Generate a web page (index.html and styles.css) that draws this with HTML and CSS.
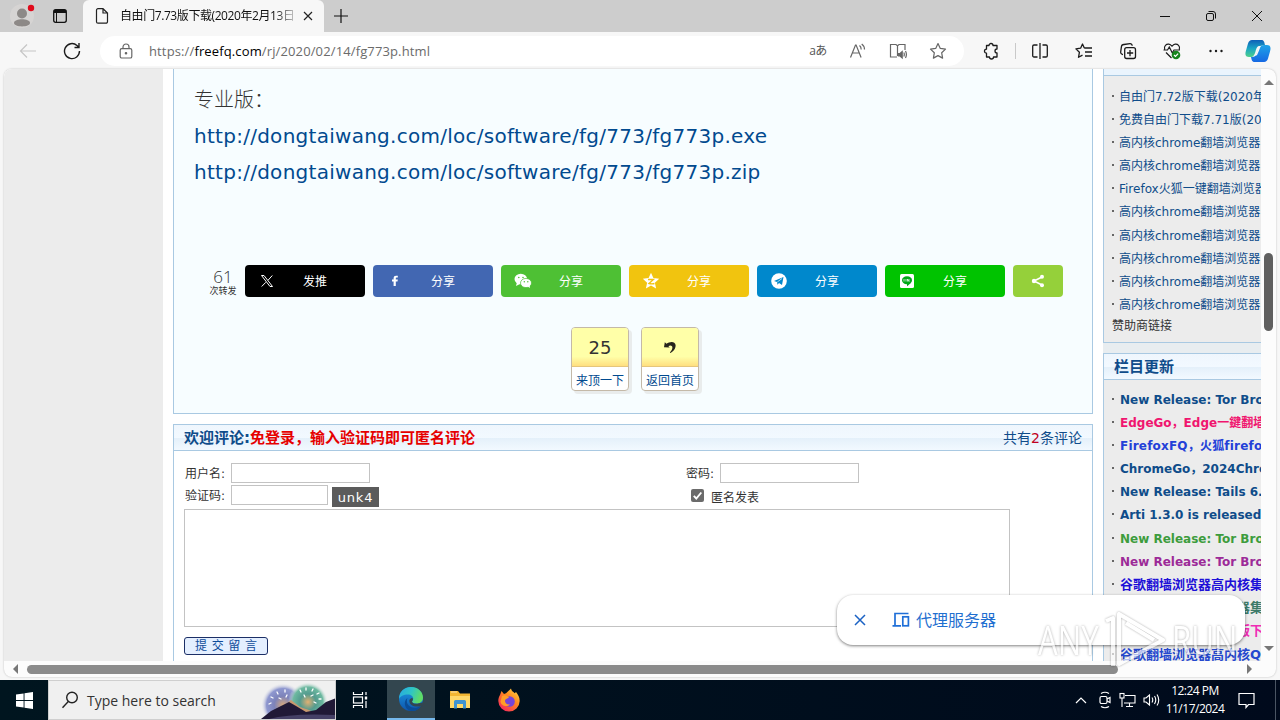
FILE: index.html
```
<!DOCTYPE html>
<html lang="zh">
<head>
  <meta charset="UTF-8">
  <title>自由门7.73版下载(2020年2月13日)</title>
  <link rel="stylesheet" href="styles.css">
</head>
<body>
<div class="screen">

  <div class="tabbar">
    <svg class="avatar" width="30" height="32" viewBox="0 0 30 32"><circle cx="15" cy="16" r="12" fill="#d6d4d3"/><circle cx="15" cy="13.500" r="5" fill="#8d8987"/><path d="M7 23c0-5 16-5 16 0 0 4.500-16 4.500-16 0z" fill="#8d8987"/><circle cx="24" cy="8" r="3.200" fill="#e00b1c"/></svg>
    <svg class="spaces" width="16" height="16" viewBox="0 0 16 16"><rect x="1.700" y="1.700" width="12.600" height="12.600" rx="2" fill="none" stroke="#111" stroke-width="1.300"/><path d="M2 2h12v3H2z" fill="#111"/><path d="M4.500 4v10" stroke="#111"/></svg>
    <div class="tab">
      <svg width="14" height="18" viewBox="0 0 14 18" fill="none" stroke="#222" stroke-width="1.200"><path d="M1.500 3.200a1.500 1.500 0 0 1 1.500-1.500h5L12.500 6v8.700a1.500 1.500 0 0 1-1.500 1.500H3a1.500 1.500 0 0 1-1.500-1.500zM8 1.700V6h4.500"/></svg>
      <span class="tab-title">自由门7.73版下载(2020年2月13日</span>
      <svg width="10" height="10" viewBox="0 0 10 10" stroke="#222" stroke-width="1.200"><path d="M1 1l8 8M9 1L1 9"/></svg>
    </div>
    <svg class="plus" width="16" height="16" viewBox="0 0 16 16" stroke="#111" stroke-width="1.200"><path d="M8 1v14M1 8h14"/></svg>
    <div class="winbtns">
      <svg width="12" height="12" viewBox="0 0 12 12" stroke="#111"><path d="M1 6.500h10"/></svg>
      <svg width="12" height="12" viewBox="0 0 12 12" stroke="#111" fill="none"><rect x="1.500" y="3.500" width="7" height="7" rx="1.500"/><path d="M3.500 1.500H8a2.500 2.500 0 0 1 2.500 2.500v4.500"/></svg>
      <svg width="12" height="12" viewBox="0 0 12 12" stroke="#111"><path d="M1 1l10 10M11 1L1 11"/></svg>
    </div>
  </div>

  <div class="toolbar">
    <div class="tool"><svg width="18" height="16" viewBox="0 0 18 16" fill="none" stroke="#c6c6c6" stroke-width="1.200"><path d="M17 8H1.500M8 1.500L1.500 8 8 14.500"/></svg></div>
    <div class="tool"><svg width="18" height="18" viewBox="0 0 18 18" fill="none" stroke="#1b1b1b" stroke-width="1.400"><path d="M16.500 9A7.500 7.500 0 1 1 14 3.500L15.800 5.300M16 1v4.500h-4.500"/></svg></div>
    <div class="address">
      <svg class="lock" width="14" height="16" viewBox="0 0 14 16" fill="none" stroke="#666" stroke-width="1.200"><rect x="1.200" y="5.600" width="11.600" height="9.400" rx="1.600"/><path d="M4 5.500V4a3 3 0 0 1 6 0v1.500"/><circle cx="7" cy="10.300" r=".7" fill="#666"/></svg>
      <span class="url">https://<b>freefq.com</b>/rj/2020/02/14/fg773p.html</span>
      <div class="addr-tool lang">aあ</div>
      <div class="addr-tool"><svg width="18" height="18" viewBox="0 0 18 18" fill="none" stroke="#666" stroke-width="1.200"><path d="M1.500 15.500L6.500 3h.6l5 12.500M3.300 11h7M10.500 3.500q1.700 1.300 1.700 4M12.700 2q2.800 2 2.800 5.500"/></svg></div>
      <div class="addr-tool"><svg width="18" height="18" viewBox="0 0 18 18" fill="none" stroke="#666" stroke-width="1.200"><path d="M8 15H1.500V2.500h5.500l1.500 1.300V14M8.500 3.800L10 2.500h6V8"/><path d="M9.500 11.500h1.500l2.200-2v6.500L11 14H9.500z" fill="#666"/><path d="M14.800 10.500q1 2 0 4M16.500 9q1.800 3.500 0 7"/></svg></div>
      <div class="addr-tool"><svg width="18" height="18" viewBox="0 0 18 18" fill="none" stroke="#666" stroke-width="1.200" stroke-linejoin="round"><path d="M9 1.500l2.300 4.900 5.200.7-3.800 3.700.9 5.300L9 13.600l-4.600 2.500.9-5.300L1.500 7.100l5.200-.7z"/></svg></div>
    </div>
    <div class="tool ext"><svg width="18" height="18" viewBox="0 0 18 18" fill="none" stroke="#1b1b1b" stroke-width="1.300" stroke-linejoin="round"><path d="M4.500 3.500H7a2 2 0 0 1 4 0h4V7a2 2 0 0 0 0 4v4h-3.500a2 2 0 0 1-4 0h-3v-3.800a2 2 0 0 1 0-4z"/></svg></div>
    <div class="divider"></div>
    <div class="tool"><svg width="18" height="18" viewBox="0 0 18 18" fill="none" stroke="#1b1b1b" stroke-width="1.300"><path d="M6.500 3H3a1.300 1.300 0 0 0-1.300 1.300v9.400A1.300 1.300 0 0 0 3 15h3.500M11.500 3H15a1.300 1.300 0 0 1 1.300 1.300v9.400A1.300 1.300 0 0 1 15 15h-3.500M9 1v16"/></svg></div>
    <div class="tool"><svg width="18" height="18" viewBox="0 0 18 18" fill="none" stroke="#1b1b1b" stroke-width="1.300" stroke-linejoin="round"><path d="M9.300 6L7.500 2 5.600 6.200.9 6.900l3.500 3.400-.9 5 4-2.200M9.300 6H17M10 10h7M10 14h7"/></svg></div>
    <div class="tool"><svg width="18" height="18" viewBox="0 0 18 18" fill="none" stroke="#1b1b1b" stroke-width="1.300"><path d="M4 12.500A2.300 2.300 0 0 1 1.700 9.800l.7-5A2.500 2.500 0 0 1 5 2.500l6-.8a2 2 0 0 1 2.200 2"/><rect x="5.700" y="5.700" width="10.800" height="10.800" rx="2"/><path d="M11 8v6.200M8 11h6.200"/></svg></div>
    <div class="tool"><svg width="18" height="18" viewBox="0 0 18 18" fill="none" stroke="#1b1b1b" stroke-width="1.200"><path d="M1.700 7.500C.5 4 3.500 1.700 6 2.200c1.500.2 2.300 1.200 3 2 .7-.8 1.500-1.800 3-2 2.500-.5 5.500 1.800 4.300 5.300M.5 8h4l1.800-3 3 6L11 8h6M3 10.500l5.500 5.500"/><circle cx="13" cy="13" r="4.300" fill="#16851c" stroke="none"/><path d="M11 13l1.500 1.500 2.600-2.800" stroke="#fff"/></svg></div>
    <div class="tool"><svg width="16" height="4" viewBox="0 0 16 4" fill="#1b1b1b"><circle cx="2.500" cy="2" r="1.200"/><circle cx="8" cy="2" r="1.200"/><circle cx="13.500" cy="2" r="1.200"/></svg></div>
    <div class="tool copilot">
      <svg width="26" height="24" viewBox="0 0 26 24">
        <defs>
          <linearGradient id="cpA" x1="0" y1="0" x2="0" y2="1"><stop offset="0" stop-color="#0e5fb8"/><stop offset=".5" stop-color="#1aa5c4"/><stop offset="1" stop-color="#4fd08b"/></linearGradient>
          <linearGradient id="cpB" x1="0" y1="0" x2="0" y2="1"><stop offset="0" stop-color="#1ea3e8"/><stop offset="1" stop-color="#1668e3"/></linearGradient>
        </defs>
        <path d="M7 1h9c3 0 3.300 2 4 5l-5 1c-3 0-3.500 2-4.500 5.500S8.500 18 5.500 18H4c-4 0-4-3.500-3-6.500l2-7C3.700 2.300 5 1 7 1z" fill="url(#cpA)"/>
        <path d="M19 23h-9c-3 0-3.300-2-4-5 4 0 5-1 6-4.500S15.500 6 19 6h3c4 0 4 3.500 3 6.500l-2 7c-.7 2.200-2 3.500-4 3.500z" fill="url(#cpB)"/>
        <path d="M15.800 7q-2 0-3.200 3.700L10.400 17q2-.5 3-4z" fill="#f7f7f7"/>
      </svg>
    </div>
  </div>

  <div class="frame">
    <div class="page">
      <div class="margin"></div>
      <div class="main">
        <div class="article">
          <p>专业版：</p>
          <p class="dl"><a>http://dongtaiwang.com/loc/software/fg/773/fg773p.exe</a></p>
          <p class="dl"><a>http://dongtaiwang.com/loc/software/fg/773/fg773p.zip</a></p>
          <div class="share">
            <div class="total"><span class="num">61</span><span class="lbl">次转发</span></div>
            <div class="btn x"><i><svg width="14" height="14" viewBox="0 0 14 14" fill="none" stroke="#fff"><path d="M1.500 1.500h2.500l8.500 11H10zM12.300 1.500L8 6.300M5.800 8.300L1.700 12.500"/></svg></i><span>发推</span></div>
            <div class="btn fb"><i><svg width="14" height="14" viewBox="0 0 14 14" fill="#fff"><path d="M5.600 12V7.500H4V5.600h1.600V4.200C5.600 2.500 6.600 1.700 8 1.700h1.800v1.900H8.600c-.6 0-.8.300-.8.800v1.200h2l-.3 1.900H7.800V12z"/></svg></i><span>分享</span></div>
            <div class="btn wx"><i><svg width="18" height="16" viewBox="0 0 18 16"><ellipse cx="6.800" cy="6" rx="6.300" ry="5.200" fill="#fff"/><path d="M3 9l-1 4 4-2z" fill="#fff"/><ellipse cx="12" cy="10" rx="5.500" ry="4.600" fill="#fff" stroke="#4ec034" stroke-width=".7"/><path d="M13 13l3 2-.5-3z" fill="#fff"/><g fill="#4ec034"><circle cx="4.800" cy="4.500" r=".8"/><circle cx="9" cy="4.500" r=".8"/><circle cx="10.300" cy="8.800" r=".7"/><circle cx="13.800" cy="8.800" r=".7"/></g></svg></i><span>分享</span></div>
            <div class="btn qz"><i><svg width="18" height="18" viewBox="0 0 18 18"><path d="M9 .8l2.400 5.300 5.800.7-4.300 3.900 1.200 5.800L9 13.600l-5.100 2.900 1.200-5.800L.8 6.800l5.800-.7z" fill="#fff"/><path d="M6 7.500h5.500L7 11.500q3 .7 5.500 0" fill="none" stroke="#f1c40f" stroke-width="1.300"/></svg></i><span>分享</span></div>
            <div class="btn tg"><i><svg width="16" height="16" viewBox="0 0 16 16"><circle cx="8" cy="8" r="7.800" fill="#fff"/><path d="M3 8l9.500-4L11 12 8 10l-1.500 1.800L6 9z" fill="#0088cc"/><path d="M6.300 9L11 5.500" stroke="#fff" stroke-width=".7"/></svg></i><span>分享</span></div>
            <div class="btn ln"><i><svg width="14" height="14" viewBox="0 0 14 14"><rect width="14" height="14" rx="1.500" fill="#fff"/><path d="M7 2.300c3 0 5 1.700 5 3.900 0 2.500-3 4.500-5 6v-2C4 10.100 2 8.500 2 6.200 2 4 4 2.300 7 2.300z" fill="#00a818"/><path d="M4 5v2.500M6 5v2.500M7.500 7.500V5L9 7.500V5" stroke="#fff" stroke-width=".7" fill="none"/></svg></i><span>分享</span></div>
            <div class="btn more"><svg width="14" height="14" viewBox="0 0 14 14" fill="#fff"><path d="M11 3L3 7l8 4" fill="none" stroke="#fff" stroke-width="1.600"/><circle cx="11" cy="2.800" r="2"/><circle cx="3" cy="7" r="2.200"/><circle cx="11" cy="11.200" r="2"/></svg></div>
          </div>
          <div class="digg">
            <div class="digg-box"><div class="digg-top">25</div><div class="digg-bottom">来顶一下</div></div>
            <div class="digg-box"><div class="digg-top"><svg width="14" height="14" viewBox="0 0 14 14"><path d="M1 7.200l.8-5 1.700 1.600C6.500 1.500 12 .8 12.600 5c.3 3.500-2.300 6.500-5 8l-.8-.6C9.500 10 9.800 7.500 9 6.300 8 5 6.500 5.500 5.400 6.200l1.300 1.400z" fill="#27241c"/></svg></div><div class="digg-bottom">返回首页</div></div>
          </div>
        </div>

        <div class="comments">
          <div class="bar"><strong>欢迎评论:<em>免登录，输入验证码即可匿名评论</em></strong><span class="count">共有<em>2</em>条评论</span></div>
          <div class="form">
            <div class="row"><div class="half"><label>用户名:</label><input type="text" class="wide"></div><div class="half"><label class="short">密码:</label><input type="text" class="wide"></div></div>
            <div class="row second"><div class="half"><label>验证码:</label><input type="text" class="code"><span class="captcha">unk4</span></div><div class="half"><span class="check"><svg width="13" height="13" viewBox="0 0 13 13"><rect width="13" height="13" rx="2" fill="#6b6b6b"/><path d="M2.800 6.800l2.500 2.700 5-6" fill="none" stroke="#fff" stroke-width="1.900"/></svg></span><label class="anon">匿名发表</label></div></div>
            <textarea></textarea>
            <button>提 交 留 言</button>
          </div>
        </div>
      </div>

      <div class="side">
        <div class="box">
          <div class="cut"></div>
          <ul>
            <li>自由门7.72版下载(2020年</li>
            <li>免费自由门下载7.71版(2020</li>
            <li>高内核chrome翻墙浏览器</li>
            <li>高内核chrome翻墙浏览器</li>
            <li>Firefox火狐一键翻墙浏览器</li>
            <li>高内核chrome翻墙浏览器</li>
            <li>高内核chrome翻墙浏览器</li>
            <li>高内核chrome翻墙浏览器</li>
            <li>高内核chrome翻墙浏览器</li>
            <li>高内核chrome翻墙浏览器</li>
          </ul>
          <div class="sponsor">赞助商链接</div>
        </div>
        <div class="box">
          <div class="bar"><strong>栏目更新</strong></div>
          <ul class="bold">
            <li>New Release: Tor Browser</li>
            <li class="pink">EdgeGo，Edge一鍵翻墙</li>
            <li class="blue">FirefoxFQ，火狐firefox</li>
            <li>ChromeGo，2024Chrome</li>
            <li>New Release: Tails 6.9</li>
            <li>Arti 1.3.0 is released:</li>
            <li class="green">New Release: Tor Browser</li>
            <li class="purple">New Release: Tor Browser</li>
            <li class="navy cjk">谷歌翻墙浏览器高内核集</li>
            <li class="teal cjk">谷歌翻墙高内核浏览器集</li>
            <li class="magenta cjk">自由门浏览器七点九版下</li>
            <li class="royal cjk">谷歌翻墙浏览器高内核Q</li>
          </ul>
        </div>
      </div>
    </div>
    <div class="vscroll"><i class="up"></i><div class="thumb"></div><i class="down"></i></div>
    <div class="hscroll"><i class="left"></i><div class="thumb"></div><i class="right"></i></div>
  </div>

  <div class="taskbar">
    <div class="start"><svg width="17" height="17" viewBox="0 0 17 17" fill="#fff"><path d="M0 2.500l7.600-1.100V8H0zM8.500 1.300L17 0v8H8.500zM0 9h7.600v6.500L0 14.500zM8.500 9H17v8l-8.500-1.300z"/></svg></div>
    <div class="search">
      <svg class="glass" width="18" height="18" viewBox="0 0 18 18" fill="none" stroke="#222" stroke-width="1.400"><circle cx="11" cy="6.500" r="5.300"/><path d="M7.300 10.500L1.500 16.800"/></svg>
      <span>Type here to search</span>
      <svg class="art" width="74" height="38" viewBox="0 0 74 38">
        <defs>
          <radialGradient id="fwA"><stop offset="0" stop-color="#d6a97e"/><stop offset=".4" stop-color="#7d83ba"/><stop offset=".75" stop-color="#8e97cf"/><stop offset="1" stop-color="#f0f0f0" stop-opacity="0"/></radialGradient>
          <radialGradient id="fwB"><stop offset="0" stop-color="#e2b072"/><stop offset=".4" stop-color="#549b8f"/><stop offset=".75" stop-color="#6db9a0"/><stop offset="1" stop-color="#f0f0f0" stop-opacity="0"/></radialGradient>
        </defs>
        <circle cx="22" cy="24" r="22" fill="url(#fwA)"/>
        <circle cx="47" cy="21" r="20" fill="url(#fwB)"/>
        <path d="M14 32l16-13 9 7 9 3 8 4-20 4z" fill="#c8996f"/>
        <path d="M0 38l10-8 10-5 8-4 7 4 10 6 10-2 10-8 10-4v22z" fill="#201936"/>
        <path d="M8 38q22-6 66-4v4z" fill="#454066"/>
        <path d="M10 16l2 1M16 11l1 2M24 9v2M8 23l2-1M18 17l2 1M26 14l-1 2M39 9l1 2M45 7v2M52 8l-1 2M58 12l-2 1M60 18h-2M43 14l1 2M52 14l-2 1M55 22l-2-1" stroke="#fff" stroke-width="1.300" stroke-linecap="round"/>
      </svg>
    </div>
    <div class="app"><svg width="16" height="16" viewBox="0 0 16 16" fill="none" stroke="#fff" stroke-width="1.200"><path d="M1.500 0v2.500h9V0M1.500 16v-2.500h9V16M14 0v3M14 9v7"/><rect x="1.500" y="5" width="9" height="6"/><path d="M14 4.500v3" stroke-width="2.400"/></svg></div>
    <div class="app active"><svg width="26" height="26" viewBox="0 0 26 26">
      <defs>
        <linearGradient id="edA" x1="0" y1="0" x2="1" y2=".3"><stop offset="0" stop-color="#26a7e3"/><stop offset=".55" stop-color="#2fc5c5"/><stop offset="1" stop-color="#5fdc66"/></linearGradient>
        <linearGradient id="edB" x1="0" y1="0" x2="0" y2="1"><stop offset="0" stop-color="#1c9be4"/><stop offset="1" stop-color="#0e55ad"/></linearGradient>
      </defs>
      <circle cx="13" cy="13" r="12" fill="url(#edB)"/>
      <path d="M1 13C1 5 7 1 13 1c7 0 12 5 12 10.500 0 4-3 6-6.500 6-3 0-4.500-1-4.500-2 0-.9 1.200-1.200 1.200-3 0-2.300-2.200-4-5.200-4C5.500 8.500 2 10.500 1 13z" fill="url(#edA)"/>
      <path d="M9.500 12C7 18 12 23 19 21.500c2-.4 3.500-1.500 4.300-2.500C20 27 9 27 7 19c-.7-3 .5-5.700 2.500-7z" fill="#0b4c96"/>
      <path d="M14 15.500c0 1.600 3 3.300 7 1.700l4.800-.8-1 3c-6 2.600-13.500 1-13.500-4.600 0-1.500 1.300-2.800 3-2.900.9.800.9 2.200-.3 3.600z" fill="#33464f"/>
    </svg></div>
    <div class="app"><svg width="22" height="20" viewBox="0 0 22 20"><path d="M1 1h8l2 2.500h10V18H1z" fill="#f2b632"/><path d="M2 2h6" stroke="#fff" stroke-width=".6"/><path d="M1 6h20v12H1z" fill="#ffd869"/><path d="M5 18V11.500a1.500 1.500 0 0 1 1.500-1.500h9a1.500 1.500 0 0 1 1.500 1.500V18.500h-3V14H8v4.500H5z" fill="#3f93d2"/></svg></div>
    <div class="app"><svg width="24" height="24" viewBox="0 0 24 24">
      <defs><linearGradient id="ffA" x1="1" y1="0" x2=".2" y2="1"><stop offset="0" stop-color="#ffe14a"/><stop offset=".45" stop-color="#ff8a1f"/><stop offset="1" stop-color="#f4245e"/></linearGradient></defs>
      <path d="M3 7l1.500-4L7 6l2-.7L14 .5c.3 2.500 2 3 3.700 4.700L19 4c2 2.500 3.700 5 3.700 9A10.700 10.700 0 0 1 12 23.500 10.700 10.700 0 0 1 1.300 13C1.300 10.500 2 8.500 3 7z" fill="url(#ffA)"/>
      <circle cx="12.500" cy="13.500" r="5.300" fill="#7545d8"/>
      <path d="M5 8c3-2 5 0 7 1-1 2-4 1.500-4 4 0 2 2 4 5 3.500-3 3-9 1.500-9.500-3z" fill="#ff9e27"/>
    </svg></div>
    <div class="tray">
      <svg width="12" height="8" viewBox="0 0 12 8" fill="none" stroke="#fff" stroke-width="1.200"><path d="M1 7l5-5 5 5"/></svg>
      <svg class="cam" width="14" height="18" viewBox="0 0 14 18" fill="none" stroke="#fff" stroke-width="1.200"><path d="M3 2.500q4-2.500 8 0M3 15.500q4 2.500 8 0"/><rect x="2" y="5.500" width="7" height="7" rx="1.500"/><path d="M9 8l3-1.500v5L9 10"/></svg>
      <svg width="17" height="16" viewBox="0 0 17 16" fill="none" stroke="#fff" stroke-width="1.100"><path d="M6 3.500h10v7.500H5M10.500 11v3M7 14.500h7"/><rect x="1" y="1.500" width="4" height="4.500"/><path d="M3 6v9"/></svg>
      <svg width="17" height="14" viewBox="0 0 17 14" fill="none" stroke="#fff" stroke-width="1.100"><path d="M1 5v4h2l3.500 3V2L3 5zM9 4.500q1.500 2.500 0 5M11.500 3q2.500 4 0 8M14 1.500q3.500 5.500 0 11"/></svg>
      <div class="clock"><div class="time">12:24 PM</div><div>11/17/2024</div></div>
      <svg class="note" width="17" height="17" viewBox="0 0 17 17" fill="none" stroke="#fff" stroke-width="1.200"><path d="M1 1.500h15v11h-5.500L8 15.500v-3H1z"/></svg>
    </div>
  </div>

  <div class="proxy">
    <svg width="12" height="12" viewBox="0 0 12 12" stroke="#1b62c4" stroke-width="1.500"><path d="M1 1l10 10M11 1L1 11"/></svg>
    <svg class="dev" width="18" height="16" viewBox="0 0 18 16" fill="none" stroke="#1f6fd8" stroke-width="1.700"><path d="M16.500 1.500H3V13M.5 13.800H9"/><rect x="10.800" y="4.800" width="5.600" height="9"/></svg>
    <span>代理服务器</span>
  </div>
  <div class="watermark">
    <span>ANY</span>
    <svg width="64" height="62" viewBox="0 0 64 62" fill="none" stroke="#fff" stroke-width="4" stroke-linejoin="round"><path d="M2 12l7-3v48M15 5v50l44-24zM22 14l28 17"/></svg>
    <span>RUN</span>
  </div>
</div>
</body>
</html>
```
FILE: styles.css
```
* {
  box-sizing: border-box;
}
body {
  margin: 0;
  font-family: "DejaVu Sans", "Noto Sans CJK SC", sans-serif;
  font-size: 12px;
  color: #333;
}
p, ul {
  margin: 0;
  padding: 0;
}
em, i {
  font-style: normal;
}
svg {
  display: block;
  flex: none;
}
.screen {
  position: relative;
  width: 1280px;
  height: 720px;
  overflow: hidden;
  display: flex;
  flex-direction: column;
  background: #f7f7f7;
}

/* browser chrome */
.tabbar {
  height: 32px;
  display: flex;
  align-items: center;
  background: #cdcdcd;
}
.avatar {
  margin-left: 7px;
}
.spaces {
  margin-left: 15px;
}
.tab {
  width: 241px;
  height: 32px;
  margin-left: 15px;
  padding-left: 12px;
  display: flex;
  align-items: center;
  background: #f7f7f7;
  border-radius: 6px 6px 0 0;
}
.tab-title {
  width: 174px;
  margin: 0 9px 0 11px;
  overflow: hidden;
  white-space: nowrap;
  font-family: "Open Sans", "Noto Sans CJK SC", sans-serif;
  font-size: 12px;
  line-height: 20px;
  letter-spacing: -0.42px;
  color: #111;
  -webkit-mask-image: linear-gradient(to right, #000 155px, transparent 180px);
}
.plus {
  margin-left: 9px;
}
.winbtns {
  margin-left: auto;
  display: flex;
  gap: 34px;
  padding-right: 17px;
}
.toolbar {
  height: 37px;
  padding-left: 6px;
  display: flex;
  align-items: center;
}
.tool {
  width: 44px;
  display: flex;
  justify-content: center;
}
.ext {
  margin-left: 5px;
}
.divider {
  width: 1px;
  height: 16px;
  margin: 0 0 0 2px;
  background: #c9c9c9;
}
.divider + .tool {
  margin-left: 2px;
}
.copilot {
  width: 40px;
}
.address {
  width: 864px;
  height: 30px;
  margin-left: 6px;
  padding: 0 6px 0 19px;
  display: flex;
  align-items: center;
  background: #fff;
  border-radius: 15px;
}
.url {
  flex: 1;
  margin-left: 16px;
  font-family: "Open Sans", sans-serif;
  font-size: 13px;
  letter-spacing: 0.13px;
  color: #6b6b6b;
}
.url b {
  font-weight: 400;
  color: #000;
}
.addr-tool {
  width: 40px;
  display: flex;
  justify-content: center;
}
.lang {
  font-family: "Open Sans", "Noto Sans CJK JP", sans-serif;
  font-size: 12px;
  line-height: 16px;
  letter-spacing: -0.5px;
  color: #555;
}

/* viewport and scrollbars */
.frame {
  width: 1272px;
  height: 608px;
  margin: 0 0 3px 4px;
  flex: none;
  display: grid;
  grid-template-columns: 1257px 15px;
  grid-template-rows: 592px 16px;
  background: #fcfcfc;
  border-radius: 8px;
  overflow: hidden;
  box-shadow: 0 0 2px rgba(0, 0, 0, 0.25);
}
.page {
  display: flex;
  overflow: hidden;
  background: #fff;
}
.vscroll {
  display: flex;
  flex-direction: column;
  align-items: center;
  padding: 11px 0 10px;
}
.vscroll .thumb {
  width: 9px;
  height: 78px;
  margin-top: 168px;
  border-radius: 5px;
  background: #606060;
}
.vscroll i {
  border: 5px solid transparent;
}
.vscroll .up {
  border-top: 0;
  border-bottom: 5px solid #777;
}
.vscroll .down {
  margin-top: auto;
  border-bottom: 0;
  border-top: 5px solid #777;
}
.hscroll {
  display: flex;
  align-items: center;
  padding: 0 9px;
}
.hscroll .thumb {
  width: 1091px;
  height: 9px;
  margin-left: 9px;
  border-radius: 5px;
  background: #8b8b8b;
}
.hscroll i {
  border: 5px solid transparent;
}
.hscroll .left {
  border-left: 0;
  border-right: 5px solid #777;
}
.hscroll .right {
  margin-left: auto;
  border-right: 0;
  border-left: 5px solid #777;
}

/* page columns */
.margin {
  width: 159px;
  flex: none;
  background: #ececec;
}
.main {
  width: 940px;
  flex: none;
  padding: 0 10px;
}
.article {
  height: 345px;
  padding: 13px 0 0 20px;
  border: 1px solid #a9c9e2;
  border-top: 0;
  background: #f7fdff;
}
.article p {
  height: 36px;
  line-height: 37px;
  font-size: 20px;
  font-weight: 300;
}
.article p.dl {
  font-weight: 400;
  line-height: 36px;
  letter-spacing: 0.27px;
  color: #014a8f;
  white-space: nowrap;
}
.share {
  display: flex;
  gap: 8px;
  margin: 75px 0 0 15px;
}
.total {
  width: 28px;
  display: flex;
  flex-direction: column;
  align-items: center;
  font-family: "Open Sans", "Noto Sans CJK SC", sans-serif;
  white-space: nowrap;
}
.total .num {
  font-size: 17px;
  line-height: 17px;
  margin-top: 3px;
  font-weight: 300;
}
.total .lbl {
  font-size: 9px;
  line-height: 11px;
}
.btn {
  width: 120px;
  height: 32px;
  display: flex;
  align-items: center;
  border-radius: 4px;
  color: #fff;
}
.btn i {
  width: 44px;
  display: flex;
  justify-content: center;
}
.btn span {
  width: 52px;
  padding-bottom: 2px;
  text-align: center;
}
.x { background: #000; }
.fb { background: #4267b2; }
.wx { background: #4ec034; }
.qz { background: #f1c40f; }
.tg { background: #0088cc; }
.ln { background: #00c300; }
.more {
  width: 50px;
  justify-content: center;
  background: #95d03a;
}
.digg {
  display: flex;
  gap: 12px;
  margin: 30px 0 0 377px;
}
.digg-box {
  width: 58px;
  height: 64px;
  border: 1px solid #c4b9a8;
  border-radius: 4px;
  background: #fff;
  box-shadow: 3px 3px 0 #e9ecec;
  overflow: hidden;
}
.digg-top {
  height: 39px;
  display: flex;
  align-items: center;
  justify-content: center;
  font-size: 18px;
  color: #333;
  border-bottom: 1px solid #e5c67c;
  background: linear-gradient(#ffffa8 75%, #ffdf80);
}
.digg-bottom {
  line-height: 29px;
  text-align: center;
  white-space: nowrap;
  color: #014a8f;
}

/* comment form */
.comments {
  height: 260px;
  margin-top: 10px;
  border: 1px solid #a9c9e2;
  background: #fff;
}
.bar {
  height: 26px;
  padding: 0 10px;
  display: flex;
  justify-content: space-between;
  line-height: 27px;
  white-space: nowrap;
  color: #0f4c8a;
  border-bottom: 1px solid #a9c9e2;
  background: linear-gradient(#eff6fd, #f2f9ff 50%, #e4f0fa 52%, #f2f9ff);
}
.bar strong {
  font-size: 15px;
}
.bar em {
  color: #e60000;
}
.bar .count {
  font-size: 14px;
}
.bar .count em {
  color: #c00020;
}
.form {
  padding: 12px 10px 0;
}
.row {
  display: flex;
  height: 22px;
}
.row.second {
  height: 24px;
}
.half {
  width: 501px;
  flex: none;
  display: flex;
  align-items: flex-start;
}
.form label {
  width: 47px;
  flex: none;
  padding-left: 1px;
  line-height: 22px;
}
.form label.short {
  width: 35px;
}
.form input {
  height: 20px;
  padding: 0;
  border: 1px solid #c3c3c3;
  background: #fff;
}
.form input.wide {
  width: 139px;
}
.form input.code {
  width: 97px;
}
.captcha {
  width: 47px;
  height: 20px;
  margin: 2px 0 0 4px;
  line-height: 21px;
  text-align: center;
  font-size: 13px;
  letter-spacing: 0.8px;
  color: #fff;
  background: #5b5b5b;
}
.check {
  margin: 4px 6px 0;
}
.form label.anon {
  width: auto;
  line-height: 26px;
}
.form textarea {
  display: block;
  width: 826px;
  height: 118px;
  resize: none;
  border: 1px solid #c3c3c3;
}
.form button {
  display: block;
  width: 84px;
  height: 18px;
  margin-top: 10px;
  padding: 0;
  font: 12px/14px "DejaVu Sans", "Noto Sans CJK SC", sans-serif;
  word-spacing: 0.8px;
  color: #0f4c9a;
  border: 1px solid #1c2f66;
  border-radius: 3px;
  background: #e4efff;
}

/* right column */
.side {
  width: 158px;
  flex: none;
  overflow: hidden;
  background: #e8edf0;
}
.side .box {
  width: 200px;
  height: 274px;
  border: 1px solid #a9c9e2;
  border-top: 0;
  background: #ececec;
}
.side .box + .box {
  height: 340px;
  margin-top: 10px;
  border-top: 1px solid #a9c9e2;
}
.cut {
  height: 7px;
  border-bottom: 1px solid #a9c9e2;
  background: #eaf4fd;
}
.side ul {
  padding: 9.500px 0 0 8px;
  list-style: none;
}
.side li {
  height: 23.2px;
  line-height: 23.2px;
  white-space: nowrap;
  color: #0f4c8a;
}
.side li::before {
  content: "";
  display: inline-block;
  width: 2px;
  height: 2px;
  margin-right: 5px;
  vertical-align: 4px;
  background: #666;
}
.side ul.bold {
  padding-top: 8.500px;
  font-weight: 700;
}
.side .bold li::before {
  margin-right: 6px;
}
.side li.cjk { font-size: 13px; line-height: 21.500px; }
.side li.pink { color: #f0156f; }
.side li.blue { color: #2340d8; letter-spacing: 0.2px; }
.side li.green { color: #3d9c3d; }
.side li.purple { color: #9c2a98; }
.side li.navy { color: #1d10d8; }
.side li.teal { color: #3c7a68; }
.side li.magenta { color: #f02bb4; }
.side li.royal { color: #2548cf; }
.sponsor {
  padding-left: 8px;
  line-height: 19px;
}

/* windows taskbar */
.taskbar {
  height: 40px;
  display: flex;
  background: linear-gradient(to right, #00151f, #000a1c);
}
.start, .app {
  width: 48px;
  display: flex;
  align-items: center;
  justify-content: center;
}
.app {
  width: 49px;
}
.app.active {
  width: 48px;
  background: #33464f;
  border-bottom: 2px solid #76b9ed;
}
.search {
  width: 288px;
  display: flex;
  align-items: center;
  padding-left: 12px;
  font-family: "Open Sans", sans-serif;
  font-size: 14px;
  color: #333;
  border: 1px solid #cfcfcf;
  background: #f0f0f0;
}
.search .glass {
  margin-right: 8px;
}
.search .art {
  margin-left: auto;
}
.search + .app {
  width: 51px;
  padding-right: 3px;
}
.tray {
  margin-left: auto;
  margin-right: 4px;
  display: flex;
  align-items: center;
  border-right: 1px solid #4a5563;
}
.tray svg {
  margin-right: 7px;
}
.tray .cam {
  margin-left: 4px;
}
.clock {
  width: 60px;
  margin: 0 13px 0 -2px;
  text-align: center;
  font-family: "Open Sans", sans-serif;
  font-size: 12px;
  line-height: 18px;
  letter-spacing: -0.5px;
  color: #fff;
}
.tray .note {
  margin-right: 20px;
}

/* floating layers */
.proxy {
  position: absolute;
  left: 837px;
  top: 595px;
  width: 408px;
  height: 50px;
  padding-left: 17px;
  display: flex;
  align-items: center;
  font-size: 16px;
  color: #1f6fd0;
  background: #fff;
  border-radius: 16px;
  box-shadow: 0 1px 3px rgba(0, 0, 0, 0.5);
}
.proxy .dev {
  margin: 0 6px 0 26px;
}
.proxy span {
  padding-bottom: 2px;
}
.watermark {
  position: absolute;
  left: 1038px;
  top: 609px;
  width: 196px;
  display: flex;
  align-items: center;
  justify-content: space-between;
  opacity: 0.65;
  font: 40px/50px "Open Sans", sans-serif;
  color: #fff;
  text-shadow: 0 0 3px rgba(0, 0, 0, 0.5);
}
.watermark span {
  width: 62px;
  transform: scaleX(0.78);
  transform-origin: 0 50%;
}
.watermark svg {
  filter: drop-shadow(0 0 1px rgba(0, 0, 0, 0.5));
}
```
